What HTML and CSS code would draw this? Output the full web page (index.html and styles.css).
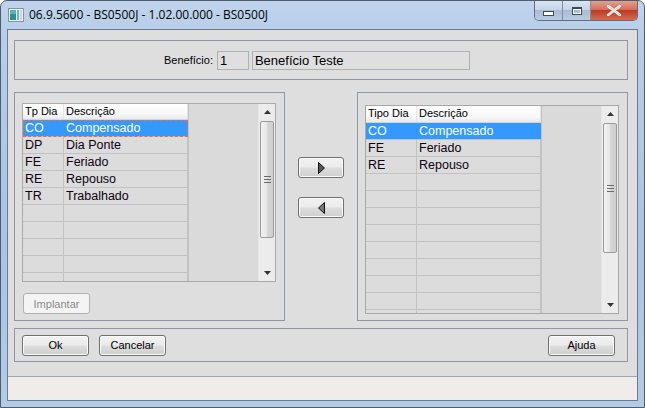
FILE: index.html
```html
<!DOCTYPE html>
<html lang="pt">
<head>
    <meta charset="UTF-8">
    <title>06.9.5600 - BS0500J - 1.02.00.000 - BS0500J</title>
    <link rel="stylesheet" href="styles.css">
</head>
<body>

    <div class="janela">
        <!-- Barra de título -->
        <div class="titulo">
            <svg class="icone" width="16" height="14" viewBox="0 0 16 14">
                <rect x="0.5" y="0.5" width="15" height="13" fill="#e9eef2" stroke="#8a949c"/>
                <rect x="2" y="2" width="6" height="10" fill="#2f8f8a"/>
                <rect x="2" y="2" width="6" height="4" fill="#5bb0c4"/>
                <rect x="9" y="2" width="2" height="10" fill="#6fb8b0"/>
                <rect x="12" y="2" width="2" height="10" fill="#c9d6dc"/>
            </svg>
            <span class="titulo-texto">06.9.5600 - BS0500J - 1.02.00.000 - BS0500J</span>
            <div class="controles">
                <div class="ctl ctl-min"><span class="min-glyph"></span></div>
                <div class="ctl ctl-max"><span class="max-glyph"></span></div>
                <div class="ctl ctl-fechar">
                    <svg width="14" height="11" viewBox="0 0 14 11">
                        <path d="M1 1 L13 10 M13 1 L1 10" stroke="#fff" stroke-width="2.6" stroke-linecap="square"/>
                        <path d="M1 1 L13 10 M13 1 L1 10" stroke="#5a2a22" stroke-width="0.6" opacity="0.4"/>
                    </svg>
                </div>
            </div>
        </div>

        <div class="cliente">
            <!-- Benefício -->
            <div class="painel painel-topo">
                <label class="rotulo">Benefício:</label>
                <div class="campo campo-cod">1</div>
                <div class="campo campo-desc">Benefício Teste</div>
            </div>

            <div class="meio">
                <!-- Tipos disponíveis -->
                <div class="painel painel-lista">
                    <div class="tabela tabela-esq">
                        <div class="colunas">
                            <div class="linha cab"><div>Tp Dia</div><div>Descrição</div></div>
                            <div class="linha sel foco"><div>CO</div><div>Compensado</div></div>
                            <div class="linha"><div>DP</div><div>Dia Ponte</div></div>
                            <div class="linha"><div>FE</div><div>Feriado</div></div>
                            <div class="linha"><div>RE</div><div>Repouso</div></div>
                            <div class="linha"><div>TR</div><div>Trabalhado</div></div>
                            <div class="linha"><div></div><div></div></div>
                            <div class="linha"><div></div><div></div></div>
                            <div class="linha"><div></div><div></div></div>
                            <div class="linha"><div></div><div></div></div>
                            <div class="linha"><div></div><div></div></div>
                        </div>
                        <div class="vazio"></div>
                        <div class="rolagem">
                            <div class="seta"><svg width="7" height="4"><path d="M3.5 0 L7 4 L0 4 Z" fill="#333"/></svg></div>
                            <div class="trilho">
                                <div class="polegar pol-esq"><span class="grip"></span></div>
                            </div>
                            <div class="seta"><svg width="7" height="4"><path d="M0 0 L7 0 L3.5 4 Z" fill="#333"/></svg></div>
                        </div>
                    </div>
                    <button class="botao desab" disabled>Implantar</button>
                </div>

                <!-- Botões de mover -->
                <div class="mover">
                    <button class="botao seta-btn">
                        <svg width="7" height="12" viewBox="0 0 7 12"><path d="M0.5 0.5 L6.5 6 L0.5 11.5 Z" fill="#555" stroke="#111"/></svg>
                    </button>
                    <button class="botao seta-btn">
                        <svg width="7" height="12" viewBox="0 0 7 12"><path d="M6.5 0.5 L0.5 6 L6.5 11.5 Z" fill="#777" stroke="#111"/></svg>
                    </button>
                </div>

                <!-- Tipos do benefício -->
                <div class="painel painel-lista painel-dir">
                    <div class="tabela tabela-dir">
                        <div class="colunas">
                            <div class="linha cab"><div>Tipo Dia</div><div>Descrição</div></div>
                            <div class="linha sel"><div>CO</div><div>Compensado</div></div>
                            <div class="linha"><div>FE</div><div>Feriado</div></div>
                            <div class="linha"><div>RE</div><div>Repouso</div></div>
                            <div class="linha"><div></div><div></div></div>
                            <div class="linha"><div></div><div></div></div>
                            <div class="linha"><div></div><div></div></div>
                            <div class="linha"><div></div><div></div></div>
                            <div class="linha"><div></div><div></div></div>
                            <div class="linha"><div></div><div></div></div>
                            <div class="linha"><div></div><div></div></div>
                            <div class="linha"><div></div><div></div></div>
                            <div class="linha"><div></div><div></div></div>
                        </div>
                        <div class="vazio"></div>
                        <div class="rolagem">
                            <div class="seta"><svg width="7" height="4"><path d="M3.5 0 L7 4 L0 4 Z" fill="#333"/></svg></div>
                            <div class="trilho">
                                <div class="polegar pol-dir"><span class="grip"></span></div>
                            </div>
                            <div class="seta"><svg width="7" height="4"><path d="M0 0 L7 0 L3.5 4 Z" fill="#333"/></svg></div>
                        </div>
                    </div>
                </div>
            </div>

            <!-- Ações -->
            <div class="painel painel-acoes">
                <button class="botao">Ok</button>
                <button class="botao">Cancelar</button>
                <button class="botao ajuda">Ajuda</button>
            </div>

            <div class="status"></div>
        </div>
    </div>

</body>
</html>
```

FILE: styles.css
```css
body {
    margin: 0;
    font-family: "Liberation Sans", Arial, sans-serif;
}

.janela {
    width: 645px;
    height: 408px;
    box-sizing: border-box;
    border: 1px solid #4d5d6e;
    border-radius: 7px 7px 0 0;
    background: linear-gradient(180deg, #bfd4ec 0%, #b6cde8 10%, #a9c3e3 60%, #b3cbe7 100%);
    overflow: hidden;
}

.titulo {
    height: 28px;
    display: flex;
    align-items: flex-start;
}

.icone {
    margin: 7px 0 0 7px;
}

.titulo-texto {
    font-family: "Open Sans", "Noto Sans", sans-serif;
    font-size: 12px;
    margin: 5px 0 0 5px;
    color: #000;
}

.controles {
    margin-left: auto;
    margin-right: 6px;
    display: flex;
    height: 19px;
    border: 1px solid #5f6f80;
    border-top: none;
    border-radius: 0 0 5px 5px;
    overflow: hidden;
}

.ctl {
    height: 19px;
    display: flex;
    align-items: center;
    justify-content: center;
}

.ctl-min, .ctl-max {
    width: 27px;
    background: linear-gradient(180deg, #d9e4f1 0%, #c6d5e6 45%, #a9bcd3 50%, #b9cbe0 100%);
    border-right: 1px solid #7f8ea0;
}

.min-glyph {
    width: 9px;
    height: 3px;
    margin-top: 5px;
    background: #fff;
    border: 1px solid #3c4a5a;
}

.max-glyph {
    width: 8px;
    height: 5px;
    background: transparent;
    border: 1px solid #3c4a5a;
    box-shadow: inset 0 0 0 1px #fff;
    border-top-width: 2px;
}

.ctl-fechar {
    width: 46px;
    background: linear-gradient(180deg, #e4a190 0%, #d56e58 45%, #c13a23 50%, #d26a4e 100%);
}

.cliente {
    margin-left: 6px;
    width: 631px;
    height: 372px;
    box-sizing: border-box;
    border: 1px solid #6d7c8c;
    background: #dedede;
    display: flex;
    flex-direction: column;
    padding: 10px 9px 0 6px;
}

.painel {
    border: 1px solid #8e98a4;
    box-sizing: border-box;
}

.painel-topo {
    height: 40px;
    display: flex;
    align-items: center;
    justify-content: center;
    padding-right: 8px;
    font-size: 11px;
}

.rotulo {
    margin-right: 4px;
}

.campo {
    height: 19px;
    box-sizing: border-box;
    border: 1px solid #abb1b8;
    font-size: 13px;
    padding: 1px 0 0 2px;
    background: #dfdfdf;
}

.campo-cod {
    width: 32px;
    margin-right: 3px;
}

.campo-desc {
    width: 218px;
}

.meio {
    margin-top: 12px;
    height: 229px;
    display: flex;
}

.painel-lista {
    width: 271px;
    padding: 10px 8px 0 7px;
}

.painel-dir {
    padding: 12px 8px 0 7px;
}

.tabela {
    display: flex;
    box-sizing: border-box;
    border: 1px solid #a9a9a9;
    overflow: hidden;
    background: #dcdcdc;
}

.tabela-esq {
    width: 254px;
    height: 179px;
}

.tabela-dir {
    width: 254px;
    height: 209px;
}

.colunas {
    overflow: hidden;
}

.linha {
    display: grid;
    box-sizing: border-box;
    height: 17px;
    border-bottom: 1px solid #c2c2c2;
    font-size: 12.5px;
    color: #100010;
}

.tabela-esq .linha {
    grid-template-columns: 41px 124px;
}

.tabela-dir .linha {
    grid-template-columns: 51px 124px;
}

.linha div {
    border-right: 1px solid #c2c2c2;
    padding: 1px 0 0 2px;
    white-space: nowrap;
}

.linha.cab {
    height: 16px;
    font-size: 11px;
    background: linear-gradient(180deg, #ffffff 0%, #f7f7f7 70%, #e9e9e9 100%);
    border-bottom: 1px solid #d5d5d5;
    color: #000;
}

.tabela-dir .linha.cab {
    height: 17px;
}

.linha.cab div {
    border-right: 1px solid #e4e4e4;
    padding-top: 1px;
}

.linha.sel {
    background: #3399ff;
    color: #fff;
}

.linha.sel div {
    border-right-color: #3399ff;
}

.linha.foco {
    outline: 1px dashed #ef6b3a;
    outline-offset: -1px;
}

.vazio {
    flex: 1;
    border-left: 1px solid #c2c2c2;
    background: #dadada;
}

.rolagem {
    width: 16px;
    display: flex;
    flex-direction: column;
    background: #ececec;
    border-left: 1px solid #e6e6e6;
}

.seta {
    height: 16px;
    display: flex;
    align-items: center;
    justify-content: center;
}

.trilho {
    flex: 1;
    display: flex;
    flex-direction: column;
}

.polegar {
    margin: 1px 1px 0 1px;
    border: 1px solid #9a9a9a;
    border-radius: 2px;
    background: linear-gradient(90deg, #f2f2f2 0%, #e8e8e8 45%, #d6d6d6 55%, #cfcfcf 100%);
    display: flex;
    align-items: center;
    justify-content: center;
}

.pol-esq {
    height: 115px;
}

.pol-dir {
    height: 128px;
}

.grip {
    width: 7px;
    height: 5px;
    border-top: 1px solid #6a6a6a;
    border-bottom: 1px solid #6a6a6a;
    background: linear-gradient(180deg, transparent 2px, #6a6a6a 2px, #6a6a6a 3px, transparent 3px);
}

.botao {
    font-family: "Liberation Sans", Arial, sans-serif;
    font-size: 11px;
    width: 67px;
    height: 21px;
    padding: 0;
    border: 1px solid #707070;
    border-radius: 3px;
    background: linear-gradient(180deg, #f2f2f2 0%, #ebebeb 48%, #dddddd 52%, #cfcfcf 100%);
    color: #000;
    box-shadow: inset 0 0 0 1px #fbfbfb;
}

.desab {
    margin: 11px 0 0 1px;
    border-color: #adb2b5;
    background: #f4f4f4;
    color: #8a8a8a;
    box-shadow: none;
}

.mover {
    width: 74px;
    display: flex;
    flex-direction: column;
    align-items: center;
    padding-top: 65px;
    gap: 19px;
    box-sizing: border-box;
}

.seta-btn {
    width: 46px;
    display: flex;
    align-items: center;
    justify-content: center;
}

.painel-acoes {
    margin-top: 7px;
    height: 34px;
    display: flex;
    align-items: center;
    padding: 0 12px 0 7px;
    gap: 10px;
}

.ajuda {
    margin-left: auto;
}

.status {
    margin: 14px -9px 0 -6px;
    flex: 1;
    border-top: 1px solid #9fa7b0;
    background: #efecea;
}
```
